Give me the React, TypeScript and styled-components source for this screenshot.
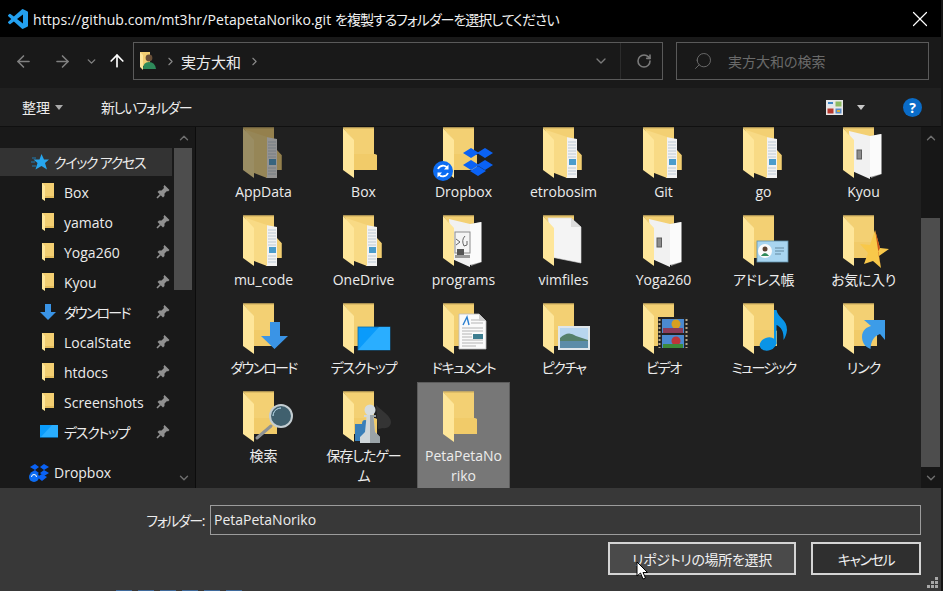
import React from "react";
import styled, { createGlobalStyle } from "styled-components";
import { ArrowLeft, ArrowRight, ArrowUp, ChevronDown, ChevronRight, ChevronUp, RotateCw, Search, X } from "lucide-react";

const GlobalStyle = createGlobalStyle`
    html, body { margin: 0; padding: 0; background: #000; }
    body {
        width: 943px;
        height: 591px;
        overflow: hidden;
        font-family: "Open Sans", "Noto Sans CJK JP", sans-serif;
        font-feature-settings: "palt";
        color: #f0f0f0;
    }
`;

const Dialog = styled.div`
    position: relative;
    width: 943px;
    height: 591px;
    box-sizing: border-box;
    border-right: 2px solid #161616;
    display: flex;
    flex-direction: column;
    overflow: hidden;
`;

const Kana = styled.span<{ $ls: number }>`
    letter-spacing: ${(p) => p.$ls}px;
    white-space: pre;
`;

const TitleBar = styled.div`
    height: 37px;
    flex: none;
    background: #000;
    display: flex;
    align-items: center;
    padding: 0 8px 0 8px;
    gap: 5px;
    font-size: 14px;
    color: #f2f2f2;
    letter-spacing: 0.1px;
`;

const TitleText = styled.span`
    flex: 1;
    white-space: nowrap;
`;

const NavBar = styled.div`
    height: 51px;
    flex: none;
    background: #191919;
    display: flex;
    align-items: flex-start;
    padding: 5px 12px 0 13px;
    box-sizing: border-box;
`;

const NavButtons = styled.div`
    width: 120px;
    height: 38px;
    flex: none;
    display: flex;
    align-items: center;
`;

const NavSlot = styled.span<{ $w: number; $ml?: number; $color?: string }>`
    width: ${(p) => p.$w}px;
    margin-left: ${(p) => p.$ml || 0}px;
    flex: none;
    display: flex;
    justify-content: center;
    color: ${(p) => p.$color || "#808080"};
`;

const AddressBox = styled.div`
    width: 530px;
    height: 38px;
    box-sizing: border-box;
    border: 1px solid #5a5a5a;
    display: flex;
    align-items: center;
    padding-left: 5px;
    font-size: 15px;
    color: #ececec;
`;

const Crumb = styled.span`
    margin: 0 4px 0 7px;
    display: flex;
    color: #8a8a8a;
`;

const AddressTail = styled.div`
    margin-left: auto;
    height: 100%;
    display: flex;
    align-items: center;
    color: #7a7a7a;
`;

const AddressAction = styled.span<{ $w: number; $line?: boolean }>`
    width: ${(p) => p.$w}px;
    height: 100%;
    box-sizing: border-box;
    padding-left: 4px;
    display: flex;
    align-items: center;
    justify-content: center;
    border-left: ${(p) => (p.$line ? "1px solid #2c2c2c" : "none")};
`;

const SearchBox = styled.div`
    width: 253px;
    height: 38px;
    margin-left: 13px;
    box-sizing: border-box;
    border: 1px solid #5a5a5a;
    display: flex;
    align-items: center;
    gap: 15px;
    padding-left: 16px;
    font-size: 14px;
    color: #6a6a6a;
`;

const FlipIcon = styled.span`
    display: flex;
    transform: scaleX(-1);
    color: #6f6f6f;
`;

const CommandBar = styled.div`
    height: 38px;
    flex: none;
    background: #202020;
    display: flex;
    align-items: center;
    padding-left: 22px;
    font-size: 14px;
    color: #ececec;
`;

const OrganizeButton = styled.span`
    display: flex;
    align-items: center;
    gap: 5px;
    width: 79px;
`;

const Caret = styled.i<{ $color?: string; $gap?: number }>`
    display: block;
    width: 0;
    height: 0;
    margin-left: ${(p) => p.$gap || 0}px;
    border-left: 4.5px solid transparent;
    border-right: 4.5px solid transparent;
    border-top: 5px solid ${(p) => p.$color || "#aaa"};
`;

const CommandRight = styled.div`
    margin-left: auto;
    display: flex;
    align-items: center;
    padding-right: 19px;
`;

const HelpBadge = styled.span`
    width: 19px;
    height: 19px;
    margin-left: 38px;
    border-radius: 50%;
    background: #0a6cc8;
    color: #fff;
    font-size: 14px;
    font-weight: 700;
    line-height: 19px;
    text-align: center;
`;

const Main = styled.div`
    height: 362px;
    flex: none;
    display: flex;
    border-top: 1px solid #101010;
    box-sizing: border-box;
    overflow: hidden;
`;

const Sidebar = styled.div`
    width: 195px;
    flex: none;
    background: #191919;
    display: flex;
    border-right: 1px solid #0c0c0c;
`;

const NavList = styled.div`
    width: 172px;
    flex: none;
    padding-top: 21px;
    display: flex;
    flex-direction: column;
    gap: 2px;
    overflow: hidden;
`;

const NavRow = styled.div<{ $active?: boolean; $top?: boolean; $gapped?: boolean }>`
    height: 28px;
    flex: none;
    display: flex;
    align-items: center;
    position: relative;
    font-size: 14px;
    white-space: nowrap;
    color: #ececec;
    padding-left: ${(p) => (p.$top ? 29 : 39)}px;
    margin-top: ${(p) => (p.$gapped ? 10 : 0)}px;
    background: ${(p) => (p.$active ? "#333333" : "transparent")};
`;

const NavIcon = styled.span`
    width: 25px;
    flex: none;
    display: flex;
`;

const PinSlot = styled.span`
    position: absolute;
    right: 2px;
    top: 6px;
    display: flex;
`;

const ScrollBar = styled.div<{ $w: number; $bg: string }>`
    width: ${(p) => p.$w}px;
    flex: none;
    display: flex;
    flex-direction: column;
    background: ${(p) => p.$bg};
    color: #6f6f6f;
`;

const ScrollArrow = styled.div`
    height: 21px;
    flex: none;
    display: flex;
    align-items: center;
    justify-content: center;
`;

const ScrollGap = styled.div<{ $h?: number }>`
    height: ${(p) => (p.$h ? `${p.$h}px` : "auto")};
    flex: ${(p) => (p.$h ? "none" : 1)};
`;

const ScrollThumb = styled.div<{ $h: number }>`
    height: ${(p) => p.$h}px;
    flex: none;
    margin-right: 1px;
    background: #4d4d4d;
`;

const SideScroll = styled(ScrollBar)`
    margin-left: 2px;
`;

const Content = styled.div`
    flex: 1;
    min-width: 0;
    background: #202020;
    display: flex;
`;

const TileViewport = styled.div`
    flex: 1;
    min-width: 0;
    overflow: hidden;
`;

const TileGrid = styled.div`
    margin-top: -9px;
    padding-left: 21px;
    display: grid;
    grid-template-columns: repeat(7, 93px);
    grid-auto-rows: 88px;
    column-gap: 7px;
`;

const Tile = styled.div<{ $selected?: boolean }>`
    height: ${(p) => (p.$selected ? "120px" : "88px")};
    box-sizing: border-box;
    padding-top: 9px;
    display: flex;
    flex-direction: column;
    align-items: center;
    background: ${(p) => (p.$selected ? "#777777" : "transparent")};
    box-shadow: ${(p) => (p.$selected ? "inset 0 0 0 1px #5c5c5c" : "none")};
`;

const TileIcon = styled.svg<{ $dim?: boolean }>`
    flex: none;
    overflow: visible;
    opacity: ${(p) => (p.$dim ? 0.55 : 1)};
`;

const TileLabel = styled.div<{ $ls?: number }>`
    width: 82px;
    margin-top: 3px;
    font-size: 14px;
    line-height: 20px;
    text-align: center;
    word-break: break-all;
    color: #ececec;
    letter-spacing: ${(p) => p.$ls || 0}px;
`;

const Footer = styled.div`
    height: 103px;
    flex: none;
    background: #383838;
    box-sizing: border-box;
    padding: 17px 20px 0 0;
    position: relative;
`;

const FolderField = styled.div`
    display: flex;
    align-items: center;
    justify-content: flex-end;
    gap: 6px;
    font-size: 14px;
    color: #ececec;
`;

const NameInput = styled.div`
    width: 711px;
    height: 30px;
    box-sizing: border-box;
    border: 1px solid #9c9c9c;
    background: #383838;
    padding-left: 3px;
    font-size: 14px;
    line-height: 27px;
`;

const FooterButtons = styled.div`
    margin-top: 7px;
    display: flex;
    justify-content: flex-end;
    gap: 15px;
`;

const DialogButton = styled.div<{ $w: number; $primary?: boolean }>`
    width: ${(p) => p.$w}px;
    height: 33px;
    box-sizing: border-box;
    border: 2px solid #d4d4d4;
    background: ${(p) => (p.$primary ? "#4a4a4a" : "#2f2f2f")};
    display: flex;
    align-items: center;
    justify-content: center;
    font-size: 14px;
    color: #f0f0f0;
`;

// sliver of the window behind the dialog, one row of its blue text
const BehindText = styled.div`
    position: absolute;
    left: 116px;
    bottom: 0;
    width: 130px;
    height: 1px;
    background: repeating-linear-gradient(90deg, #3f6a9c 0 16px, #383838 16px 22px);
`;

const CursorMark = styled.svg`
    position: absolute;
    left: 636px;
    top: 561px;
`;

const GripMark = styled.svg`
    position: absolute;
    right: 3px;
    bottom: 3px;
`;

const BASE = "#f3d073";

// shared folder drawing, origin at the top left of the folder
const FolderBack = () => (
    <>
        <path d="M0 0.5H31V27L34 28V43H10V13L0 1Z" fill={BASE} />
        <path d="M0 0.5H31V1.5H1Z" fill="#c9a95c" />
        <path d="M11 27H31L34 28V43H11Z" fill="#f1cb69" />
    </>
);

const FolderFlap = () => <path d="M0 1L11 13V51L0 43Z" fill="#fee69a" />;

const DocFolder = () => (
    <>
        <path d="M0 0.5H31V26L38.5 28V43H10V13L0 1Z" fill={BASE} />
        <path d="M0 0.5H31V1.5H1Z" fill="#c9a95c" />
        <path d="M23 10L34 12V51H23Z" fill="#f2f2f2" />
        <path d="M25 15h8M25 18h8M25 21h8M25 24h8M25 27h8M25 30h8M25 41h8M25 44h8M25 47h8" stroke="#bccad6" strokeWidth="1" />
        <rect x="26" y="32" width="7" height="6" fill="#4a9ccc" />
        <path d="M34 23L38.5 28V43H34Z" fill="#f3cf72" />
        <path d="M3 3L24 10V51L6 44Z" fill="#f8da85" />
        <FolderFlap />
    </>
);

const PageFolder = ({ kind }: { kind: "zip" | "blank" | "prog" }) => (
    <>
        <path d="M0 0.5H31V20H38V43H10V13L0 1Z" fill={BASE} />
        <path d="M0 0.5H31V1.5H1Z" fill="#c9a95c" />
        {kind === "blank" ? (
            <>
                <path d="M5 3H28L38 12V48L8 42Z" fill="#f4f4f4" stroke="#d8d8d8" strokeWidth="0.6" />
                <path d="M28 3V12H38Z" fill="#dcdcdc" />
            </>
        ) : (
            <>
                <path d="M28 9L39 7V47L28 51Z" fill="#8f8f8f" />
                <path d="M27 9L38 7V47L27 50Z" fill="#fbfbfb" />
                <path d="M6 4L27 9V52L9 44Z" fill="#f1f1f1" />
            </>
        )}
        {kind === "zip" && <rect x="14" y="23" width="4.5" height="9" fill="#8c8c8c" stroke="#5c5c5c" strokeWidth="1" />}
        {kind === "prog" && (
            <>
                <rect x="12" y="17" width="15" height="21" fill="#f4f4f4" stroke="#8c8c8c" />
                <path d="M13 24L17 27L13 30M22 21Q18 25 21 31L24 30V26" stroke="#666" fill="none" />
                <rect x="14" y="34" width="7" height="6" fill="#555" />
                <rect x="12" y="40" width="15" height="3" fill="#9a9a9a" />
            </>
        )}
        <FolderFlap />
    </>
);

const PlainFolder = () => (
    <>
        <FolderBack />
        <FolderFlap />
    </>
);

const diamond = (x: number, y: number) => `M${x} ${y}l8 -5 8 5 -8 5z`;

const DropboxOverlay = () => (
    <>
        <path d={diamond(20, 26) + diamond(34, 26) + diamond(20, 38) + diamond(34, 38) + diamond(27, 44)} fill="#0a62f5" />
        <circle cx="0" cy="44" r="10" fill="#0c6cf2" />
        <path d="M-5 42A5.5 5.5 0 0 1 4.5 41M5 46A5.5 5.5 0 0 1 -4.5 47" stroke="#fff" strokeWidth="1.8" fill="none" />
        <path d="M5.5 37.5V42.5H1ZM-5.5 50.5V45.5H-1Z" fill="#fff" />
    </>
);

const DownloadOverlay = () => <path d="M27 19H37V33H45L31.5 46L18 33H27Z" fill="#3a94e6" />;

const DesktopOverlay = () => (
    <>
        <rect x="15" y="24" width="32" height="23" fill="#0a9bfb" stroke="#0d6da8" strokeWidth="0.8" />
        <path d="M15 47L36 24H47V47Z" fill="#2aaeff" />
    </>
);

const DocumentOverlay = () => (
    <>
        <path d="M16 11H36L43 18V46H16Z" fill="#fafafa" stroke="#bdbdbd" strokeWidth="0.8" />
        <path d="M36 11V18H43Z" fill="#cfcfcf" />
        <path d="M20 22L24 14L26 22" fill="none" stroke="#2a7fd0" strokeWidth="1.4" />
        <path d="M28 17h8M28 20h12M19 25h21M19 28h21M19 31h10M19 34h10M19 37h21M19 40h21M19 43h14" stroke="#b4b4b4" strokeWidth="1" />
        <rect x="30" y="31" width="10" height="5" fill="#3d7d8f" />
    </>
);

const PictureOverlay = () => (
    <>
        <rect x="15" y="23" width="32" height="24" fill="#dfe6ea" />
        <rect x="17" y="25" width="28" height="20" fill="#b8d6ef" />
        <path d="M17 35Q25 27 33 33L45 37V39H17Z" fill="#55806a" />
        <rect x="17" y="38" width="28" height="7" fill="#5b8ca8" />
    </>
);

const VideoOverlay = () => (
    <>
        <rect x="15" y="14" width="30" height="33" fill="#232323" />
        <path d="M16.5 16v29M43.5 16v29" stroke="#b9a98a" strokeWidth="2" strokeDasharray="2 2" />
        <rect x="19" y="16" width="22" height="14" fill="#4b8ad0" />
        <rect x="19" y="32" width="22" height="13" fill="#4b8ad0" />
        <circle cx="33" cy="21" r="4.5" fill="#d8a020" />
        <circle cx="33" cy="38" r="4.5" fill="#c0353a" />
        <rect x="20" y="25" width="20" height="5" fill="#8b3d5a" />
        <rect x="20" y="41" width="20" height="4" fill="#3e8a3a" />
    </>
);

const MusicOverlay = () => (
    <>
        <ellipse cx="25" cy="41" rx="8.5" ry="6.5" fill="#0a94e6" transform="rotate(-20 25 41)" />
        <path d="M31 7H33.5C35 15 44 16 44 27C43.7 31 42 35 40.5 37C41 28 38 24 33.5 22V41H31Z" fill="#0a94e6" />
    </>
);

const LinkOverlay = () => (
    <path d="M21 17H42V37L37 31C31 33 28 38 27.5 46C22 44 19 39 19 34C19 27 24 24 28 23Z" fill="#3c9ce8" />
);

const SearchOverlay = () => (
    <>
        <path d="M28 35L14 47" stroke="#8d9296" strokeWidth="3" strokeLinecap="round" />
        <circle cx="38" cy="25" r="11" fill="#40606e" stroke="#c3cdd1" strokeWidth="2" />
        <path d="M30 25A8 8 0 0 1 38 17A8 8 0 0 0 30 25Z" fill="#9fc0d0" stroke="#9fc0d0" />
    </>
);

const GameOverlay = () => (
    <>
        <path d="M12 33H19Q19 29 22 29T25 33H31V50H12Z" fill="#3a7fb8" />
        <path d="M33 14C39 20 48 25 48 31C48 35 44 38 40 37L35 38Z" fill="#343434" />
        <circle cx="27" cy="19" r="5.5" fill="#d5dcdf" />
        <path d="M21 24H33V26H30.5L32 41L37 46V52H17V46L22 41L23.5 26H21Z" fill="#d0d7da" />
        <path d="M27 24H33V26H30.5L32 41L37 46V52H27Z" fill="#9aa3a7" />
    </>
);

const ContactOverlay = () => (
    <>
        <rect x="14" y="26" width="31" height="21" fill="#a8d5f0" stroke="#5f8fa8" strokeWidth="0.8" />
        <circle cx="22" cy="36" r="7" fill="#fafafa" />
        <circle cx="22" cy="34" r="2.5" fill="#5d4332" />
        <path d="M18 41Q22 35 26 41Z" fill="#2e8a5a" />
        <path d="M32 33h9M32 36h9M32 39h6" stroke="#7aa2ba" strokeWidth="1.4" />
    </>
);

const StarOverlay = () => (
    <>
        <path d="M32 15L37 33L46 34L36 41L38 53L30 46L21 49L25 38L17 29L27 30Z" fill="#f8c84a" />
        <path d="M32 15L37 33L35 37L38 53L36 41Z" fill="#c9541a" />
    </>
);

const tiles: { name: string; art: React.ReactNode; dim?: boolean; selected?: boolean; ls?: number }[] = [
    { name: "AppData", art: <DocFolder />, dim: true },
    { name: "Box", art: <PlainFolder /> },
    { name: "Dropbox", art: <><PlainFolder /><DropboxOverlay /></> },
    { name: "etrobosim", art: <DocFolder /> },
    { name: "Git", art: <DocFolder /> },
    { name: "go", art: <DocFolder /> },
    { name: "Kyou", art: <PageFolder kind="zip" /> },
    { name: "mu_code", art: <DocFolder /> },
    { name: "OneDrive", art: <DocFolder /> },
    { name: "programs", art: <PageFolder kind="prog" /> },
    { name: "vimfiles", art: <PageFolder kind="blank" /> },
    { name: "Yoga260", art: <PageFolder kind="zip" /> },
    { name: "アドレス帳", art: <><PlainFolder /><ContactOverlay /></>, ls: -0.4 },
    { name: "お気に入り", art: <><PlainFolder /><StarOverlay /></>, ls: -0.4 },
    { name: "ダウンロード", art: <><PlainFolder /><DownloadOverlay /></>, ls: -1.7 },
    { name: "デスクトップ", art: <><PlainFolder /><DesktopOverlay /></>, ls: -1.2 },
    { name: "ドキュメント", art: <><PlainFolder /><DocumentOverlay /></>, ls: -1.3 },
    { name: "ピクチャ", art: <><PlainFolder /><PictureOverlay /></>, ls: -1.5 },
    { name: "ビデオ", art: <><PlainFolder /><VideoOverlay /></>, ls: -1.3 },
    { name: "ミュージック", art: <><PlainFolder /><MusicOverlay /></>, ls: -1.7 },
    { name: "リンク", art: <><PlainFolder /><LinkOverlay /></>, ls: -1 },
    { name: "検索", art: <><PlainFolder /><SearchOverlay /></> },
    { name: "保存したゲーム", art: <><PlainFolder /><GameOverlay /></>, ls: -1 },
    { name: "PetaPetaNoriko", art: <PlainFolder />, selected: true },
];

const SmallFolder = () => (
    <svg width="16" height="20" viewBox="0 0 16 20">
        <path d="M3 1H15V16H3Z" fill="#f3cf72" />
        <path d="M3 1L6 4V19L3 17Z" fill="#fee69a" />
        <path d="M6 14H15V16H6Z" fill="#e4bd5e" />
    </svg>
);

const SmallDownload = () => (
    <svg width="18" height="17" viewBox="0 0 18 17">
        <path d="M6 0H12V8H17L9 16L1 8H6Z" fill="#3a94e6" />
    </svg>
);

const SmallDesktop = () => (
    <svg width="18" height="14" viewBox="0 0 18 14" style={{ marginLeft: 1 }}>
        <rect width="18" height="13" fill="#0a9bfb" />
        <path d="M0 13L12 0H18V13Z" fill="#2aaeff" />
        <rect y="12" width="18" height="1" fill="#0c5f96" />
    </svg>
);

const SmallStar = () => (
    <svg width="18" height="16" viewBox="0 0 18 16" style={{ marginLeft: 2 }}>
        <path d="M10.5 0L13 5.5H18L14 9L16 15.5L10.5 12L4.5 15.5L6.5 9L2.5 5.5H8.5Z" fill="#27a6ee" />
        <path d="M1 4H5M0 8H4M1 12H5" stroke="#1f7fb8" strokeWidth="1" />
    </svg>
);

const SmallDropbox = () => (
    <svg width="20" height="19" viewBox="0 0 20 19">
        <path d="M1 4l5 -3 4 3 -4 3zM11 4l4 -3 5 3 -5 3zM1 10l5 -3 4 3 -4 3zM11 10l4 -3 5 3 -5 3z" fill="#0a62f5" />
        <circle cx="5" cy="14" r="5" fill="#0c6cf2" />
        <path d="M8 14l5 -3 5 3 -5 4z" fill="#0a62f5" />
        <path d="M2.5 14a2.5 2.5 0 0 1 5 0" stroke="#fff" fill="none" strokeWidth="1" />
    </svg>
);

const Pin = () => (
    <svg width="14" height="15" viewBox="0 0 14 15">
        <path d="M8.5 1L13.5 6L12 7.5L11 7L8.5 9.5L8.5 12L7 13.5L1.5 8L3 6.5L5.5 6.5L8 4L7.5 2.5Z" fill="#909090" />
        <path d="M4.5 10.5L1 14" stroke="#909090" strokeWidth="1.6" />
    </svg>
);

const VsCodeLogo = () => (
    <svg width="20" height="20" viewBox="0 0 100 100">
        <path
            fillRule="evenodd"
            fill="#23a0ef"
            d="M96.5 10.8L75.9 0.9a6 6 0 0 0-7.1 1.2L29.4 38.1 12.2 25.1a4 4 0 0 0-5.3.2L1.4 30.4a4 4 0 0 0 0 5.9L16.3 50 1.4 63.6a4 4 0 0 0 0 5.9l5.5 5a4 4 0 0 0 5.3.2L29.4 61.9l39.4 36a6 6 0 0 0 7.1 1.2l20.6-9.9A6 6 0 0 0 100 83.7V16.2a6 6 0 0 0-3.5-5.4zM75 72.7L45.1 50 75 27.3z"
        />
    </svg>
);

const UserFolder = () => (
    <svg width="18" height="20" viewBox="0 0 18 20">
        <path d="M1 1H11V15H1Z" fill="#f3cf72" />
        <path d="M1 1L4 4V19L1 16Z" fill="#fee69a" />
        <circle cx="10" cy="7" r="3.4" fill="#6a5038" />
        <path d="M4 18Q4 11 10 11T17 18Z" fill="#2e8a5a" />
    </svg>
);

const ViewIcon = () => (
    <svg width="17" height="15" viewBox="0 0 17 15">
        <rect width="17" height="15" fill="#e8e8e8" />
        <rect x="1.5" y="1.5" width="6" height="5" fill="#dfe8f0" />
        <rect x="2" y="2" width="5" height="2" fill="#3f86c5" />
        <rect x="9.5" y="1.5" width="6" height="5" fill="#8dbb62" />
        <rect x="1.5" y="8.5" width="6" height="5" fill="#b5382e" />
        <rect x="9.5" y="8.5" width="6" height="5" fill="#5b8cc8" />
        <rect x="11" y="10" width="3" height="2" fill="#d8b040" />
    </svg>
);

const Grip = () => (
    <GripMark width="11" height="11" viewBox="0 0 11 11">
        <path d="M8 0h3v3H8zM4 4h3v3H4zM8 4h3v3H8zM0 8h3v3H0zM4 8h3v3H4zM8 8h3v3H8z" fill="#a8a8a8" />
    </GripMark>
);

const Cursor = () => (
    <CursorMark width="14" height="20" viewBox="0 0 14 20">
        <path d="M1 1V15L4.5 12L7 18L9.5 17L7 11.5H11.5Z" fill="#fff" stroke="#000" strokeWidth="1" />
    </CursorMark>
);

const sideItems = [
    { name: "Box", icon: <SmallFolder /> },
    { name: "yamato", icon: <SmallFolder /> },
    { name: "Yoga260", icon: <SmallFolder /> },
    { name: "Kyou", icon: <SmallFolder /> },
    { name: "ダウンロード", icon: <SmallDownload />, ls: -1.8 },
    { name: "LocalState", icon: <SmallFolder /> },
    { name: "htdocs", icon: <SmallFolder /> },
    { name: "Screenshots", icon: <SmallFolder /> },
    { name: "デスクトップ", icon: <SmallDesktop />, ls: -1.3 },
];

export default function App() {
    return (
        <Dialog>
            <GlobalStyle />
            <TitleBar>
                <VsCodeLogo />
                <TitleText>
                    https://github.com/mt3hr/PetapetaNoriko.git <Kana $ls={-1}>を複製するフォルダーを選択してください</Kana>
                </TitleText>
                <X size={26} strokeWidth={1.1} color="#fff" />
            </TitleBar>

            <NavBar>
                <NavButtons>
                    <NavSlot $w={20}><ArrowLeft size={19} /></NavSlot>
                    <NavSlot $w={30} $ml={14}><ArrowRight size={19} /></NavSlot>
                    <NavSlot $w={14} $ml={7}><ChevronDown size={13} strokeWidth={2.5} /></NavSlot>
                    <NavSlot $w={20} $ml={9} $color="#fff"><ArrowUp size={20} /></NavSlot>
                </NavButtons>
                <AddressBox>
                    <UserFolder />
                    <Crumb><ChevronRight size={13} /></Crumb>
                    実方大和
                    <Crumb><ChevronRight size={13} /></Crumb>
                    <AddressTail>
                        <AddressAction $w={42}><ChevronDown size={16} /></AddressAction>
                        <AddressAction $w={42} $line><RotateCw size={16} strokeWidth={2.4} /></AddressAction>
                    </AddressTail>
                </AddressBox>
                <SearchBox>
                    <FlipIcon><Search size={20} strokeWidth={1.1} /></FlipIcon>
                    実方大和の検索
                </SearchBox>
            </NavBar>

            <CommandBar>
                <OrganizeButton>整理<Caret /></OrganizeButton>
                <Kana $ls={-1.4}>新しいフォルダー</Kana>
                <CommandRight>
                    <ViewIcon />
                    <Caret $color="#c8c8c8" $gap={14} />
                    <HelpBadge>?</HelpBadge>
                </CommandRight>
            </CommandBar>

            <Main>
                <Sidebar>
                    <NavList>
                        <NavRow $active $top>
                            <NavIcon><SmallStar /></NavIcon><Kana $ls={-1.3}>クイック アクセス</Kana>
                        </NavRow>
                        {sideItems.map((item) => (
                            <NavRow key={item.name}>
                                <NavIcon>{item.icon}</NavIcon>
                                <Kana $ls={item.ls || 0}>{item.name}</Kana>
                                <PinSlot><Pin /></PinSlot>
                            </NavRow>
                        ))}
                        <NavRow $top $gapped>
                            <NavIcon><SmallDropbox /></NavIcon>Dropbox
                        </NavRow>
                    </NavList>
                    <SideScroll $w={19} $bg="#191919">
                        <ScrollArrow><ChevronUp size={14} strokeWidth={2.4} /></ScrollArrow>
                        <ScrollThumb $h={142} />
                        <ScrollGap />
                        <ScrollArrow><ChevronDown size={14} strokeWidth={2.4} /></ScrollArrow>
                    </SideScroll>
                </Sidebar>
                <Content>
                    <TileViewport>
                        <TileGrid>
                            {tiles.map((t) => (
                                <Tile key={t.name} $selected={t.selected}>
                                    <TileIcon width="93" height="52" viewBox="-26 0 93 52" $dim={t.dim}>
                                        {t.art}
                                    </TileIcon>
                                    <TileLabel $ls={t.ls}>{t.name}</TileLabel>
                                </Tile>
                            ))}
                        </TileGrid>
                    </TileViewport>
                    <ScrollBar $w={20} $bg="#171717">
                        <ScrollArrow><ChevronUp size={14} strokeWidth={2.4} /></ScrollArrow>
                        <ScrollGap $h={70} />
                        <ScrollThumb $h={249} />
                        <ScrollArrow><ChevronDown size={14} strokeWidth={2.4} /></ScrollArrow>
                    </ScrollBar>
                </Content>
            </Main>

            <Footer>
                <FolderField>
                    <Kana $ls={-1.4}>フォルダー:</Kana>
                    <NameInput>PetaPetaNoriko</NameInput>
                </FolderField>
                <FooterButtons>
                    <DialogButton $w={188} $primary><Kana $ls={-0.3}>リポジトリの場所を選択</Kana></DialogButton>
                    <DialogButton $w={110}><Kana $ls={-1.4}>キャンセル</Kana></DialogButton>
                </FooterButtons>
                <Grip />
                <BehindText />
            </Footer>
            <Cursor />
        </Dialog>
    );
}
